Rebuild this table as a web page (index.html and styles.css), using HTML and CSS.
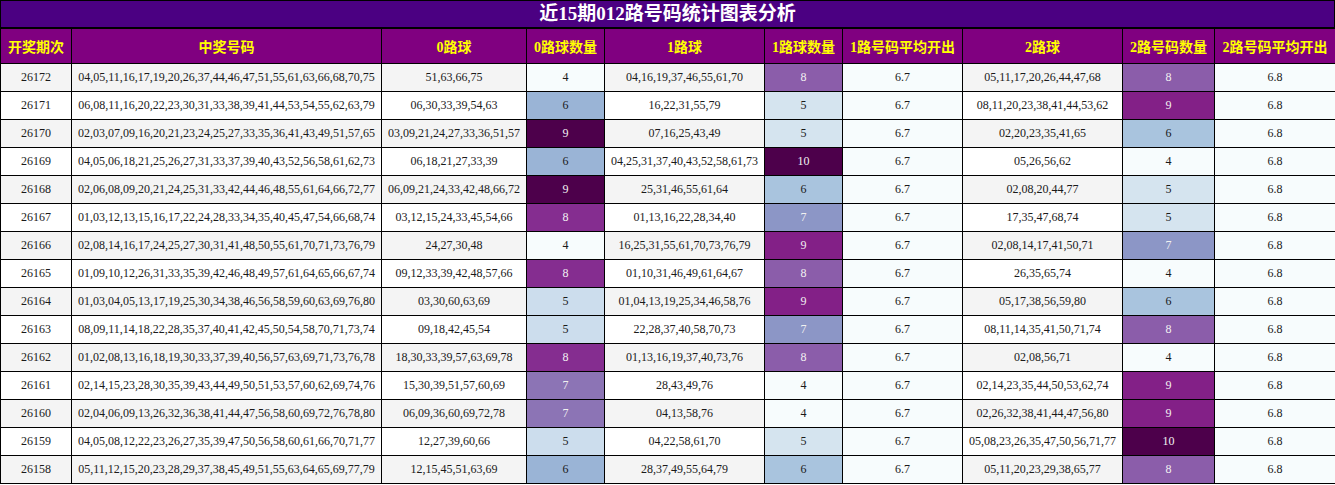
FILE: index.html
```html
<!DOCTYPE html>
<html lang="zh">
<head>
<meta charset="utf-8">
<title>近15期012路号码统计图表分析</title>
<link rel="stylesheet" href="styles.css">
</head>
<body>
<div class="title">近15期012路号码统计图表分析</div>
<table class="stats">
<colgroup>
<col class="c-issue"><col class="c-win"><col class="c-b0"><col class="c-n0"><col class="c-b1"><col class="c-n1"><col class="c-a1"><col class="c-b2"><col class="c-n2"><col class="c-a2">
</colgroup>
<thead>
<tr><th>开奖期次</th><th>中奖号码</th><th>0路球</th><th>0路球数量</th><th>1路球</th><th>1路球数量</th><th>1路号码平均开出</th><th>2路球</th><th>2路号码数量</th><th>2路号码平均开出</th></tr>
</thead>
<tbody>
<tr><td>26172</td><td>04,05,11,16,17,19,20,26,37,44,46,47,51,55,61,63,66,68,70,75</td><td>51,63,66,75</td><td class="g0">4</td><td>04,16,19,37,46,55,61,70</td><td class="h8 lt">8</td><td class="g0">6.7</td><td>05,11,17,20,26,44,47,68</td><td class="h8 lt">8</td><td class="g0">6.8</td></tr>
<tr><td>26171</td><td>06,08,11,16,20,22,23,30,31,33,38,39,41,44,53,54,55,62,63,79</td><td>06,30,33,39,54,63</td><td class="z6">6</td><td>16,22,31,55,79</td><td class="h5">5</td><td class="g0">6.7</td><td>08,11,20,23,38,41,44,53,62</td><td class="h9 lt">9</td><td class="g0">6.8</td></tr>
<tr><td>26170</td><td>02,03,07,09,16,20,21,23,24,25,27,33,35,36,41,43,49,51,57,65</td><td>03,09,21,24,27,33,36,51,57</td><td class="z9 lt">9</td><td>07,16,25,43,49</td><td class="h5">5</td><td class="g0">6.7</td><td>02,20,23,35,41,65</td><td class="h6">6</td><td class="g0">6.8</td></tr>
<tr><td>26169</td><td>04,05,06,18,21,25,26,27,31,33,37,39,40,43,52,56,58,61,62,73</td><td>06,18,21,27,33,39</td><td class="z6">6</td><td>04,25,31,37,40,43,52,58,61,73</td><td class="h10 lt">10</td><td class="g0">6.7</td><td>05,26,56,62</td><td class="g0">4</td><td class="g0">6.8</td></tr>
<tr><td>26168</td><td>02,06,08,09,20,21,24,25,31,33,42,44,46,48,55,61,64,66,72,77</td><td>06,09,21,24,33,42,48,66,72</td><td class="z9 lt">9</td><td>25,31,46,55,61,64</td><td class="h6">6</td><td class="g0">6.7</td><td>02,08,20,44,77</td><td class="h5">5</td><td class="g0">6.8</td></tr>
<tr><td>26167</td><td>01,03,12,13,15,16,17,22,24,28,33,34,35,40,45,47,54,66,68,74</td><td>03,12,15,24,33,45,54,66</td><td class="z8 lt">8</td><td>01,13,16,22,28,34,40</td><td class="h7 lt">7</td><td class="g0">6.7</td><td>17,35,47,68,74</td><td class="h5">5</td><td class="g0">6.8</td></tr>
<tr><td>26166</td><td>02,08,14,16,17,24,25,27,30,31,41,48,50,55,61,70,71,73,76,79</td><td>24,27,30,48</td><td class="g0">4</td><td>16,25,31,55,61,70,73,76,79</td><td class="h9 lt">9</td><td class="g0">6.7</td><td>02,08,14,17,41,50,71</td><td class="h7 lt">7</td><td class="g0">6.8</td></tr>
<tr><td>26165</td><td>01,09,10,12,26,31,33,35,39,42,46,48,49,57,61,64,65,66,67,74</td><td>09,12,33,39,42,48,57,66</td><td class="z8 lt">8</td><td>01,10,31,46,49,61,64,67</td><td class="h8 lt">8</td><td class="g0">6.7</td><td>26,35,65,74</td><td class="g0">4</td><td class="g0">6.8</td></tr>
<tr><td>26164</td><td>01,03,04,05,13,17,19,25,30,34,38,46,56,58,59,60,63,69,76,80</td><td>03,30,60,63,69</td><td class="z5">5</td><td>01,04,13,19,25,34,46,58,76</td><td class="h9 lt">9</td><td class="g0">6.7</td><td>05,17,38,56,59,80</td><td class="h6">6</td><td class="g0">6.8</td></tr>
<tr><td>26163</td><td>08,09,11,14,18,22,28,35,37,40,41,42,45,50,54,58,70,71,73,74</td><td>09,18,42,45,54</td><td class="z5">5</td><td>22,28,37,40,58,70,73</td><td class="h7 lt">7</td><td class="g0">6.7</td><td>08,11,14,35,41,50,71,74</td><td class="h8 lt">8</td><td class="g0">6.8</td></tr>
<tr><td>26162</td><td>01,02,08,13,16,18,19,30,33,37,39,40,56,57,63,69,71,73,76,78</td><td>18,30,33,39,57,63,69,78</td><td class="z8 lt">8</td><td>01,13,16,19,37,40,73,76</td><td class="h8 lt">8</td><td class="g0">6.7</td><td>02,08,56,71</td><td class="g0">4</td><td class="g0">6.8</td></tr>
<tr><td>26161</td><td>02,14,15,23,28,30,35,39,43,44,49,50,51,53,57,60,62,69,74,76</td><td>15,30,39,51,57,60,69</td><td class="z7 lt">7</td><td>28,43,49,76</td><td class="g0">4</td><td class="g0">6.7</td><td>02,14,23,35,44,50,53,62,74</td><td class="h9 lt">9</td><td class="g0">6.8</td></tr>
<tr><td>26160</td><td>02,04,06,09,13,26,32,36,38,41,44,47,56,58,60,69,72,76,78,80</td><td>06,09,36,60,69,72,78</td><td class="z7 lt">7</td><td>04,13,58,76</td><td class="g0">4</td><td class="g0">6.7</td><td>02,26,32,38,41,44,47,56,80</td><td class="h9 lt">9</td><td class="g0">6.8</td></tr>
<tr><td>26159</td><td>04,05,08,12,22,23,26,27,35,39,47,50,56,58,60,61,66,70,71,77</td><td>12,27,39,60,66</td><td class="z5">5</td><td>04,22,58,61,70</td><td class="h5">5</td><td class="g0">6.7</td><td>05,08,23,26,35,47,50,56,71,77</td><td class="h10 lt">10</td><td class="g0">6.8</td></tr>
<tr><td>26158</td><td>05,11,12,15,20,23,28,29,37,38,45,49,51,55,63,64,65,69,77,79</td><td>12,15,45,51,63,69</td><td class="z6">6</td><td>28,37,49,55,64,79</td><td class="h6">6</td><td class="g0">6.7</td><td>05,11,20,23,29,38,65,77</td><td class="h8 lt">8</td><td class="g0">6.8</td></tr>
</tbody>
</table>
</body>
</html>
```

FILE: styles.css
```css
html, body {
  margin: 0;
  padding: 0;
  background: #ffffff;
}

body {
  font-family: "Liberation Serif", "Noto Sans CJK SC", serif;
  width: 1335px;
}

.title {
  box-sizing: border-box;
  height: 28px;
  border: 1px solid #000;
  background: #4b0082;
  color: #ffffff;
  font-weight: bold;
  font-size: 19px;
  line-height: 26px;
  text-align: center;
}

.stats {
  width: 1335px;
  table-layout: fixed;
  border-collapse: collapse;
  font-size: 12px;
  color: #1a1a1a;
}

.c-issue { width: 71px; }
.c-win { width: 310px; }
.c-b0 { width: 145px; }
.c-n0 { width: 78px; }
.c-b1 { width: 160px; }
.c-n1 { width: 78px; }
.c-a1 { width: 120px; }
.c-b2 { width: 160px; }
.c-n2 { width: 92px; }
.c-a2 { width: 121px; }

.stats th,
.stats td {
  border: 1px solid #000;
  text-align: center;
  padding: 0 2px;
  white-space: nowrap;
  overflow: hidden;
}

.stats th {
  height: 34px;
  background: #800080;
  color: #ffff00;
  font-size: 14px;
  font-weight: bold;
}

.stats td {
  height: 27px;
}

.stats tbody tr:nth-child(odd) { background: #f4f4f4; }
.stats tbody tr:nth-child(even) { background: #ffffff; }

.g0 { background: #f7fcfd; }

.z5 { background: #ccdded; }
.z6 { background: #9ab4d6; }
.z7 { background: #8c74b5; }
.z8 { background: #852d90; }
.z9 { background: #4d004b; }

.h5 { background: #d5e4ef; }
.h6 { background: #a9c4de; }
.h7 { background: #8c96c6; }
.h8 { background: #8b5daa; }
.h9 { background: #832087; }
.h10 { background: #4d004b; }

.stats td.lt { color: #f1f1f1; }
```
